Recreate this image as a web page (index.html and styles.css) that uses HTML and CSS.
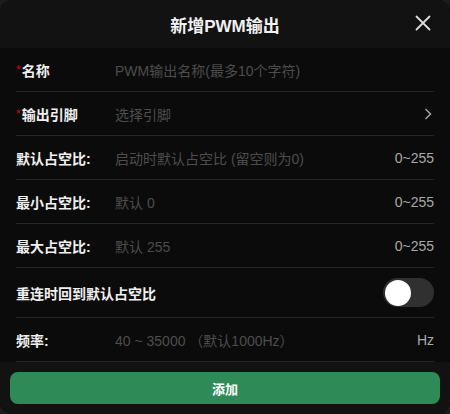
FILE: index.html
```html
<!DOCTYPE html>
<html>
<head>
    <title>新增PWM输出</title>
    <link rel="stylesheet" href="styles.css">
</head>
<body>
    <div class="modal">
        <header class="modal-head">
            <h1>新增PWM输出</h1>
            <button class="close-btn">
                <svg width="16" height="16" viewBox="0 0 16 16"><path d="M1.5 1.5L14.5 14.5M14.5 1.5L1.5 14.5" stroke="#ddd" stroke-width="1.8" stroke-linecap="round"/></svg>
            </button>
        </header>

        <div class="form">
            <div class="row">
                <label class="label"><span class="req">*</span>名称</label>
                <span class="field placeholder">PWM输出名称(最多10个字符)</span>
            </div>
            <div class="row">
                <label class="label"><span class="req">*</span>输出引脚</label>
                <span class="field placeholder">选择引脚</span>
                <svg class="chevron" width="8" height="12" viewBox="0 0 8 12"><path d="M1.5 1L6.5 6L1.5 11" fill="none" stroke="#aaa" stroke-width="1.4"/></svg>
            </div>
            <div class="row">
                <label class="label">默认占空比:</label>
                <span class="field placeholder">启动时默认占空比 (留空则为0)</span>
                <span class="unit">0~255</span>
            </div>
            <div class="row">
                <label class="label">最小占空比:</label>
                <span class="field placeholder">默认 0</span>
                <span class="unit">0~255</span>
            </div>
            <div class="row">
                <label class="label">最大占空比:</label>
                <span class="field placeholder">默认 255</span>
                <span class="unit">0~255</span>
            </div>
            <div class="row row-tall">
                <label class="label label-wide">重连时回到默认占空比</label>
                <span class="switch"><span class="knob"></span></span>
            </div>
            <div class="row">
                <label class="label">频率:</label>
                <span class="field placeholder">40 ~ 35000 （默认1000Hz）</span>
                <span class="unit">Hz</span>
            </div>
        </div>

        <div class="modal-foot">
            <button class="add-btn">添加</button>
        </div>
    </div>
</body>
</html>
```

FILE: styles.css
```css
body {
  font-family: "Liberation Sans", "Noto Sans CJK SC", sans-serif;
  margin: 0;
  padding: 0;
  background: #1c1c1c;
  width: 450px;
  height: 414px;
  overflow: hidden;
}

.modal {
  display: flex;
  flex-direction: column;
  height: 414px;
  background: #0b0b0b;
  border-radius: 12px;
  overflow: hidden;
}

.modal-head {
  position: relative;
  height: 48px;
  background: #121212;
  display: flex;
  align-items: center;
  justify-content: center;
}

.modal-head h1 {
  margin: 0;
  color: #f2f2f2;
  font-size: 17px;
  font-weight: bold;
}

.close-btn {
  position: absolute;
  top: 15px;
  right: 19px;
  width: 16px;
  height: 16px;
  padding: 0;
  border: none;
  background: none;
  display: flex;
}

.form {
  flex: 1;
  padding: 0 16px;
}

.row {
  display: flex;
  align-items: center;
  height: 43px;
  border-bottom: 1px solid #262626;
  font-size: 14px;
}

.row-tall {
  height: 49px;
}

.label {
  width: 99px;
  flex-shrink: 0;
  color: #f0f0f0;
  font-weight: bold;
  white-space: nowrap;
}

.label-wide {
  flex: 1;
}

.req {
  color: #d0021b;
  font-weight: normal;
  font-size: 12px;
  margin-right: 1px;
  position: relative;
  top: -2px;
}

.field {
  flex: 1;
  white-space: nowrap;
}

.placeholder {
  color: #4d4d4d;
}

.unit {
  color: #a8a8a8;
}

.chevron {
  margin-right: 2px;
}

.switch {
  width: 51px;
  height: 29px;
  border-radius: 15px;
  background: #303030;
  display: flex;
  align-items: center;
  padding-left: 2px;
  box-sizing: border-box;
}

.knob {
  width: 26px;
  height: 26px;
  border-radius: 50%;
  background: #fff;
}

.modal-foot {
  height: 52px;
  background: #121212;
  padding: 10px;
  box-sizing: border-box;
}

.add-btn {
  width: 100%;
  height: 32px;
  border: none;
  border-radius: 8px;
  background: #2e8b57;
  color: #fff;
  font-family: inherit;
  font-size: 13px;
  font-weight: bold;
}
```
